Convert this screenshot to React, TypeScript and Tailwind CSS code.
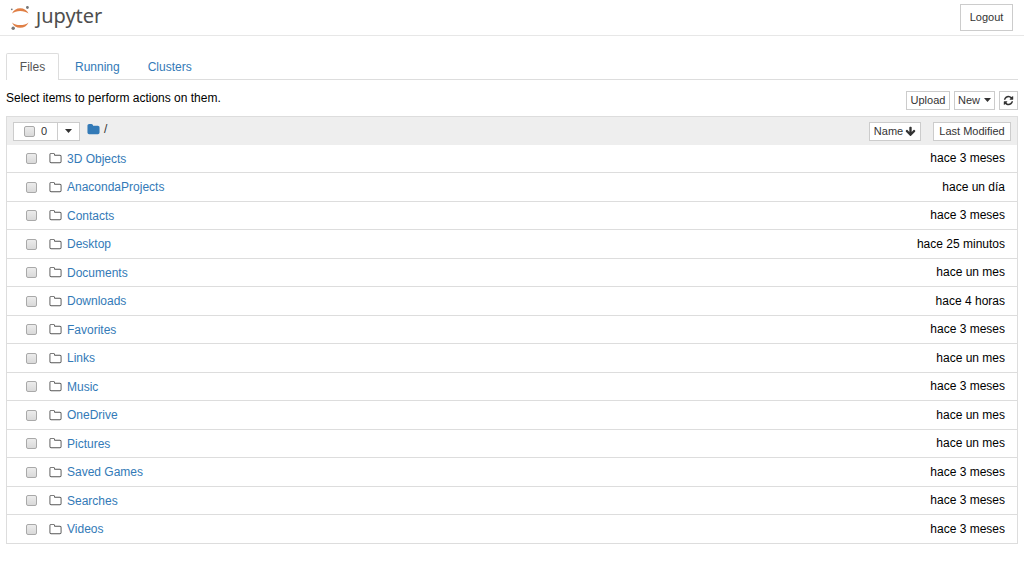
import { useState } from 'react'

const files = [
  { name: '3D Objects', modified: 'hace 3 meses' },
  { name: 'AnacondaProjects', modified: 'hace un día' },
  { name: 'Contacts', modified: 'hace 3 meses' },
  { name: 'Desktop', modified: 'hace 25 minutos' },
  { name: 'Documents', modified: 'hace un mes' },
  { name: 'Downloads', modified: 'hace 4 horas' },
  { name: 'Favorites', modified: 'hace 3 meses' },
  { name: 'Links', modified: 'hace un mes' },
  { name: 'Music', modified: 'hace 3 meses' },
  { name: 'OneDrive', modified: 'hace un mes' },
  { name: 'Pictures', modified: 'hace un mes' },
  { name: 'Saved Games', modified: 'hace 3 meses' },
  { name: 'Searches', modified: 'hace 3 meses' },
  { name: 'Videos', modified: 'hace 3 meses' },
]

const checkbox =
  'w-[11px] h-[11px] shrink-0 appearance-none rounded-[2px] border border-[#a9a9a9] bg-linear-to-b from-[#ececec] to-[#d9d9d9] checked:from-[#337ab7] checked:to-[#337ab7]'

const btn = 'flex items-center justify-center border border-[#ccc] bg-white text-[11px] text-[#333]'

const Logo = () => (
  <svg className="w-5 h-6" viewBox="0 0 20 24" aria-hidden="true">
    <path d="M2 7.600C3.400 4.200 6.500 2.300 10.200 2.300s6.900 1.900 8.300 5.300C16.300 5.700 13.500 4.900 10.200 4.900S4.200 5.700 2 7.600z" fill="#e07f45" />
    <path d="M2 16.400C3.400 19.800 6.500 21.700 10.200 21.700s6.900-1.900 8.300-5.300c-2.200 1.900-5 2.700-8.300 2.700s-6-.8-8.200-2.700z" fill="#e07f45" />
    <circle cx="17.400" cy="1.500" r="1.400" fill="#767677" />
    <circle cx="1.800" cy="3.300" r=".9" fill="#767677" />
    <circle cx="3.200" cy="22.200" r="1.700" fill="#767677" />
  </svg>
)

const FolderOpenLine = () => (
  <svg className="w-[13px] h-[13px] shrink-0" viewBox="0 0 1792 1792" fill="#555" aria-hidden="true">
    <path d="M1600 1312v-704q0-40-28-68t-68-28h-704q-40 0-68-28t-28-68v-64q0-40-28-68t-68-28h-320q-40 0-68 28t-28 68v960q0 40 28 68t68 28h1216q40 0 68-28t28-68zm128-704v704q0 92-66 158t-158 66h-1216q-92 0-158-66t-66-158v-960q0-92 66-158t158-66h320q92 0 158 66t66 158v32h672q92 0 158 66t66 158z" />
  </svg>
)

const FolderSolid = () => (
  <svg className="w-[13px] h-[13px]" viewBox="0 0 1792 1792" fill="#337ab7" aria-hidden="true">
    <path d="M1728 608v704q0 92-66 158t-158 66h-1216q-92 0-158-66t-66-158v-960q0-92 66-158t158-66h320q92 0 158 66t66 158v32h672q92 0 158 66t66 158z" />
  </svg>
)

const ArrowDown = () => (
  <svg className="w-[11px] h-[11px]" viewBox="0 0 1792 1792" fill="#333" aria-hidden="true">
    <path d="M1675 832q0 53-37 90l-651 652q-39 37-91 37-53 0-90-37l-651-652q-38-36-38-90 0-53 38-91l74-75q39-37 91-37 53 0 90 37l294 294v-704q0-52 38-90t90-38h128q52 0 90 38t38 90v704l294-294q37-37 90-37 52 0 91 37l75 75q37 39 37 91z" />
  </svg>
)

const Refresh = () => (
  <svg className="w-[11px] h-[11px]" viewBox="0 0 1792 1792" fill="#333" aria-hidden="true">
    <path d="M1639 1056q0 5-1 7-64 268-268 434.500t-478 166.500q-146 0-282.500-55t-243.500-157l-129 129q-19 19-45 19t-45-19-19-45v-448q0-26 19-45t45-19h448q26 0 45 19t19 45-19 45l-137 137q71 66 161 102t187 36q134 0 250-65t186-179q11-17 53-117 8-23 30-23h192q13 0 22.500 9.500t9.500 22.500zm25-800v448q0 26-19 45t-45 19h-448q-26 0-45-19t-19-45 19-45l138-138q-148-137-349-137-134 0-250 65t-186 179q-11 17-53 117-8 23-30 23h-199q-13 0-22.500-9.500t-9.500-22.500v-7q65-268 270-434.500t480-166.500q146 0 284 55.500t245 156.500l130-129q19-19 45-19t45 19 19 45z" />
  </svg>
)

const Caret = () => (
  <svg className="w-[7px] h-1" viewBox="0 0 7 4" fill="#333" aria-hidden="true">
    <path d="M0 0h7L3.500 4z" />
  </svg>
)

const App = () => {
  const [selected, setSelected] = useState<string[]>([])

  const toggle = (name: string) =>
    setSelected(selected.includes(name) ? selected.filter((n) => n !== name) : [...selected, name])

  const toggleAll = () => setSelected(selected.length === files.length ? [] : files.map((f) => f.name))

  return (
    <div className="min-h-screen bg-white text-xs text-black font-['Liberation_Sans',Arial,sans-serif]">
      <header className="flex h-9 items-center justify-between border-b border-[#e7e7e7] pl-[10px] pr-[11px]">
        <a href="#" aria-label="jupyter" className="flex items-center gap-[6px]">
          <Logo />
          <span className="pb-1 text-xl leading-6 text-[#4e4e4e] font-['Noto_Sans','Open_Sans',sans-serif]">ȷupyter</span>
        </a>
        <button className={`${btn} h-[27px] w-[53px]`}>Logout</button>
      </header>

      <main className="px-[6px] pt-[17px]">
        <nav className="flex h-[27px] border-b border-[#ddd]">
          <a href="#files" className="-mb-px flex w-[53px] items-center justify-center rounded-t-[2px] border border-b-0 border-[#ddd] bg-white text-[#555]">
            Files
          </a>
          <a href="#running" className="flex items-center pl-4 pr-[14px] pt-px text-[#337ab7]">Running</a>
          <a href="#clusters" className="flex items-center px-[14px] pt-px text-[#337ab7]">Clusters</a>
        </nav>

        <div className="flex h-9 items-center justify-between">
          <p>Select items to perform actions on them.</p>
          <div className="flex gap-1 pt-1">
            <button className={`${btn} h-[19px] w-11`}>Upload</button>
            <button className={`${btn} h-[19px] w-[41px] gap-1`}>
              New <Caret />
            </button>
            <button className={`${btn} h-[19px] w-[19px]`} aria-label="Refresh">
              <Refresh />
            </button>
          </div>
        </div>

        <section className="border border-b-0 border-[#ddd]">
          <div className="flex h-7 items-center justify-between bg-[#eee] px-[6px]">
            <div className="flex items-center">
              <label className={`${btn} h-[19px] w-[45px] gap-[6px]`}>
                <input
                  type="checkbox"
                  aria-label="Select all"
                  className={checkbox}
                  checked={selected.length === files.length}
                  onChange={toggleAll}
                />
                {selected.length}
              </label>
              <button className={`${btn} -ml-px h-[19px] w-[23px]`} aria-label="Selection menu">
                <Caret />
              </button>
              <a href="#root" aria-label="Home" className="ml-[7px] pb-1"><FolderSolid /></a>
              <span className="ml-1 pb-1 text-[#333]">/</span>
            </div>
            <div className="flex gap-3">
              <button className={`${btn} h-[19px] w-[52px] gap-[2px]`}>
                Name <ArrowDown />
              </button>
              <button className={`${btn} h-[19px] w-[78px]`}>Last Modified</button>
            </div>
          </div>

          <ul>
            {files.map((file) => (
              <li key={file.name} className="flex odd:h-7 even:h-[29px] items-center border-b border-[#ddd] pl-[19px] pr-3">
                <input
                  type="checkbox"
                  aria-label={file.name}
                  className={checkbox}
                  checked={selected.includes(file.name)}
                  onChange={() => toggle(file.name)}
                />
                <a href={`#${file.name}`} className="ml-3 flex items-center gap-[5px] text-[#337ab7]">
                  <FolderOpenLine />
                  {file.name}
                </a>
                <span className="ml-auto pb-px">{file.modified}</span>
              </li>
            ))}
          </ul>
        </section>
      </main>
    </div>
  )
}

export default App
